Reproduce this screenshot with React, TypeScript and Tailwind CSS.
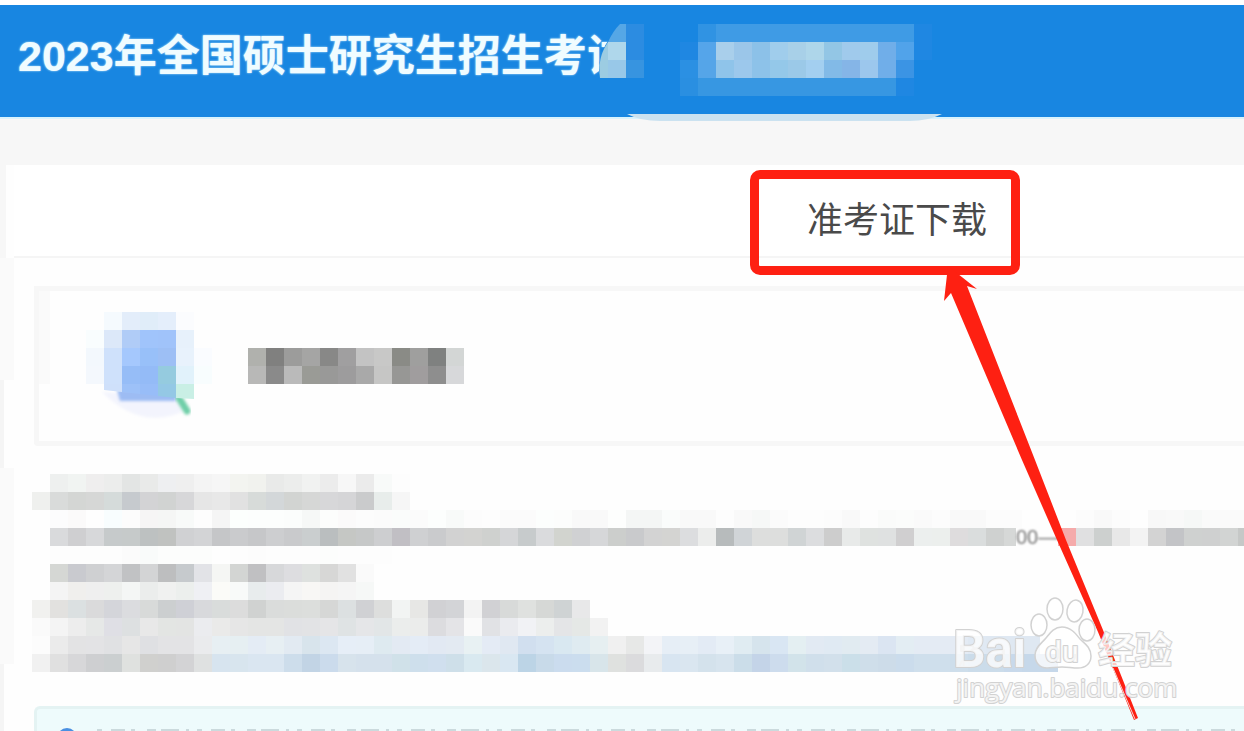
import React from 'react'

// every row is a list of cell colours, '-' is an empty cell
const NAME_ROWS = [
    'b0b1ad 80807f 9c9c9b a5a5a4 888887 a09fa0 c3c3c3 c8c8c7 8a8b86 9f9f9e 7f8180 d3d6d5',
    'b8b8b7 8a8a8a bababa 9a9b96 999998 9d9c9d a9a9a9 c6c6c5 979795 a09d9e 8e8e8e d7d8da',
]

const ROW_A = [
    '- eef0ef f1f4f2 efeeee ecedec e3e5e4 e9eae9 eeeff1 efefef f4f4f4 f6f6f6 f3f4f0 f1f2ee e9eae9 ecedec f1f2f1 ececec f7f7f7 ebebeb f8faf9 fdfdfd',
    'eff0ee d9dbda d4d6d4 d6d7d6 d5dbda c6cace d3d3d5 d1d3d2 d7d7d9 e6e6e6 e8e8e8 e1e1e1 d7dbd9 d3d7d9 d2d4d2 d6d7d6 d7d7d9 d5d5d7 cacbcc e8edeb f6f6f6',
    '- fcfcfd fbfafa fefefe f8fdfe fcfcfc f6f5f5 f5f6f5 f8faf9 fdfdfd f5f5f5 fcfffd fcfefd fcfefd fbfdfc f6f8f7 fcfdfc fbfafa fcfcfc fbfbfb fafcfb fbfbfb fcfefd f8faf9 fcfcfc fdfdfd fbfbfb fbfbfb fcfefd fcfdfc f9f9f9 f9f9f9 fdfefd f4f6f5 f4f6f5 fafcfb f9f9f9 f9f9f9 fdfdfd f9f9f9 f6f8f7 fbfbfb fdfdfd fdfdfd fcfcfc f9f9f9 fdfdfd fafbfa fbfcfb fafafa fcfcfc f9f9f9 f9f9f9 fcfcfc fcfcfc - - - fcfcfc f9f9f9 fcfcfc fefefe f8f8f8 f9f9f9 f6f8f7 fafafa fafafa fafafa',
]

const LINE_START =
    '- d9dadc cfcfd1 d7d8da c6cacb c6caca bdc1c1 c0c2c0 d0d1d3 d3d4d6 c5c6c8 cacbcd c6c7c9 cdced0 c9cacc cacecf babebf c5c7c4 c6c8c8 cdced0 c1bfc4 cfd0d2 cacbcd d2d2d2 d3d3d1 cfd1cf d5d6d8 c7cbcc dadbdd d2d4cf d0d1d3 d6d7d9 cccecc c9cacc d3d3d3 d4d4d2 dcdddf ecedec b7bbbc d0d4d7 dddedd dddedd d0d4d5 dcdddf cdcdcd e8eae9 dfe2e0 dfe1e1 d0cfd0 ecefee ecefed dedcdd dadddd cfd1d0'
const LINE_END = 'f5abab e0e0e1 cdd0cf e8e8e8 f3f3f3 d3d3d3 c3c4c7 cfd1d0 cfd0d0 d2d4d3 c6c8c7'

const ROW_B = [
    '- fdfdfd fdfdfd fdfdfd fdfdfd fbfbfb f9fbfa fcfdfc fcfdfc fcfdfc fefefe fdfdfd fcfcfc fdfdfd fdfdfd fdfdfd fcfdfc fdfdfd fdfdfd fdfdfd',
    '- d5d7d4 c9cacf cfd0d2 d4d5d7 c1c2c4 d3d4d5 bdbebf c6cacd e2e3e7 f5f6f4 d3d5d3 c0c0c2 d7d8da dddde0 dee1df d7d7d6 e1e1e1 fafafa',
    '- f4f4f4 f0efed efefef eef0ee f4f6f5 ebedec f0f1f0 ecefed eff0f4 fbfbf8 f8faf9 e8eced ebecf0 f5f5f5 f8f7f5 f5f4f3 f5f5f5 f6f8f7',
    'f1f1ef e2e1df dbe0e1 dadadb d4d5da dbdcdf d8dad9 cccfd0 cfd0d6 d8d9dc d9dcdb dcdcdc d0d2d1 dadcdb dbdddb dcdedc d6d7d6 dce0e1 d0d1d4 dddedd f2f4f3 e7e7e5 d1d1d4 d3d4d7 f3f3f3 d1d1d4 d8dad9 dfe1df d6d8d6 cfd3d4 e8e8e9',
    'fafafa f4f4f4 ededed e6e8e7 dfdfe5 dde0e1 e8e8e8 e3e5e3 e3e4e3 ebecef eaeae9 e6e6e6 e4e5e4 e4e5e4 e1e2e5 e2e3e5 e5e5e7 dfe3e4 e5e6e8 e2e6e7 ebedec ebeceb dcdcdf e4e4e7 fafafa e1e2e5 eaebef f1f2f5 eceeed e4e5e7 e5e8e6 f2f2f2',
    'fcfcfc ebebeb e3e3e4 e3e3e5 e0e1e3 e6e6e6 dfe0e3 e3e3e5 e3e3e5 eaebed e7eff3 e6eff2 e4ecf5 e7eff3 e2eaf2 d8e4ec dce7f2 e6eef7 e6eef6 deeaf0 e3eaf3 e4ecf6 e2e9f3 e3eaf2 e8f1f3 e4ebf5 e0e8f2 d1dfef d5e3f1 d9e8f1 dfebf1 e6eff1 f0f0f0 e7e8e7 f3f4f7 e6eef6 e7eff6 e3ebf5 e8f0f7 e0ecf2 d6e4ed d9e6f3 e4eff2 e2eaf3 e0eaf3 e1ebf1 e4ebf3 dbe5f2 e3edf3 e4ebf4 e4ebf4 e4ebf4 e0e9f3 dfe8f2 dfe8f2 dfe8f2',
    'f1f1f1 e0e0e0 d7d7d9 cecfd1 cbcfd0 dfe1df d0d0ce cfcfcf d3d3d5 dfe1e1 d7e4ef d8e5ee dae6f1 dae6f1 cdddeb c2d4e5 cbdbec d7e3ec d5e1ec d5e1ec d0e1e9 cedfec d0dfee cedfe9 d9e9f0 dbe6ec d9e7f2 bcd4e6 c8dae9 cbdcee cbddee d8e5ea dfe1df dbdbdd e8ebed d8e5f1 dae6f0 d4e2ec d7e4ee cbdde9 c4d4e8 cddced d2e3ea d0dfeb d2e0eb cbdfe9 cfdeea cddce9 cbdcec cfdfec cfdfec cedeeb cbdcea cbdcea c8d9eb c6d8ea c6d8ea',
]

const HEADER_ROWS = [
    '- 3093e3 3f9be5 3f9be5 3f9be5 3f9be5 3f9be5 3f9be5 3f9be5 3f9be5 3f9be5 3f9be5 3f9be5 1f87e2',
    '1f87e2 55a5ea a9cfeb 9bc6e9 8cc1e8 a0cdec a8d0e8 aed6ea 93c6e5 a0caec 9fccec 70aee9 51a3ea 1f87e2',
    '2b90e3 55a5e8 8fc4ea 9cc8ec 8dc2e9 94c8e9 9bc9e8 a3cff0 82bae7 85b5e7 9cc7ed 70aee9 3b94e4',
    '2a8fe1 3797e2 3797e2 3797e2 3797e2 3797e2 3797e2 3797e2 3797e2 3797e2 3797e2 3797e2 1f87e2',
]

const ICON_ROWS = [
    '- f5fafe e3edfa e0edf9 e4eefb fbfcfe -',
    'f9fdfe dce8f9 b0ccf7 a0c4fb a0c3fa e7f1fb -',
    'f3f8fd cfe1fb a5c8fd 98c0f9 9dbff5 e8f2fc fafcff',
    'f4f8fd cfe1fb 96bdf7 94bbf7 95cbdf e1f2fb f8fdfe',
    '- cfe0fa 9dc1f8 98bdf8 94c8e5 c9efe5 -',
]

function Cells({ row }: { row: string }) {
    return (
        <>
            {row.split(' ').map((c, i) => (
                <span
                    key={i}
                    className="block size-[18px] shrink-0"
                    style={{ backgroundColor: c === '-' ? 'transparent' : '#' + c }}
                />
            ))}
        </>
    )
}

function Mosaic({ rows }: { rows: string[] }) {
    return (
        <div aria-hidden="true">
            {rows.map((row, i) => (
                <div key={i} className="flex">
                    <Cells row={row} />
                </div>
            ))}
        </div>
    )
}

function Header() {
    return (
        <header className="relative h-[114px] shrink-0 border-b-2 border-[#d9f3fd] bg-[#1886e1] pl-[18px]">
            <h1 className="pt-[21px] text-[43px] leading-[60px] font-bold whitespace-nowrap text-[#f0fcff] text-shadow-[0_0_2px_#d8f4ff]">
                2023年全国硕士研究生招生考试
            </h1>
            <svg className="absolute top-0 left-[590px]" width="360" height="118" viewBox="590 5 360 118" aria-hidden="true">
                <path d="M624 24Q600 42 599 70V78H604V96H660V24Z" fill="#1886e1" />
                <path d="M620 24H626V42H608Q613 31 620 24Z" fill="#55a7e6" />
                <path d="M608 42V78H600Q597 58 608 42Z" fill="#9ccce2" />
                <path d="M608 42H626V60H608Z" fill="#afd7eb" />
                <path d="M608 60H626V78H608Z" fill="#98c8e8" />
                <path d="M626 24H644V60H626Z" fill="#2c8ce1" />
                <path d="M626 60H644V78H626Z" fill="#3794e0" />
                <path d="M627 114H942Q928 121 910 121H660Q640 121 627 114Z" fill="#cbe2f0" />
            </svg>
            <div className="absolute top-[19px] left-[680px]">
                <Mosaic rows={HEADER_ROWS} />
            </div>
        </header>
    )
}

function Gutter() {
    return (
        <div className="flex w-[14px] shrink-0 flex-col">
            <div className="h-[93px] w-1.5 bg-[#f7f7f7]"></div>
            <div className="h-[122px] bg-[#fafafa]"></div>
            <div className="h-[88px] w-1 bg-[#f5f5f5]"></div>
            <div className="h-[196px] bg-[#fafafa]"></div>
            <div className="w-1 flex-1 bg-[#f5f5f5]"></div>
        </div>
    )
}

function Tabs() {
    return (
        <nav className="flex h-[93px] border-b-2 border-[#f5f5f5] bg-white">
            <div className="w-[736px] shrink-0"></div>
            <div className="relative z-10 mt-[5px] h-[105px] shrink-0">
                <button className="h-[105px] w-[270px] rounded-[10px] border-[9px] border-[#fe2012] pb-1 pl-6 text-center text-4xl text-[#4a4a4a]">
                    准考证下载
                </button>
                <svg className="absolute top-[94px] left-[190px]" width="204" height="460" viewBox="940 264 204 460" aria-hidden="true">
                    <path d="M948 266L977 289L967 286L1035 460L1066 540L1103 630L1138 718L1134 720L1098 632L1057 540L1022 460L951 293L944 301Z" fill="#fe2012" />
                    <path d="M1113 668L1135 719" stroke="#f3d5d3" strokeWidth="1" fill="none" />
                </svg>
            </div>
        </nav>
    )
}

function Profile() {
    return (
        <div className="mt-7 ml-5 flex h-40 rounded-bl border-5 border-r-0 border-[#f7f7f7]">
            <div className="h-[93px] w-[11px] bg-[#fafafa]"></div>
            <div className="mt-[21px] ml-9 w-[126px]">
                <svg width="126" height="112" viewBox="86 312 126 112" aria-hidden="true">
                    <defs>
                        <filter id="soft" x="-50%" y="-50%" width="200%" height="200%">
                            <feGaussianBlur stdDeviation="1.5" />
                        </filter>
                        <clipPath id="above">
                            <path d="M86 312H212V400L176 398L104 390L86 388Z" />
                        </clipPath>
                    </defs>
                    <path d="M102 392Q140 430 182 412L180 396Z" fill="#f3f4fd" filter="url(#soft)" />
                    <path d="M117 390H176V401H120Z" fill="#9dbcf3" filter="url(#soft)" />
                    <path d="M179 398L187 411" stroke="#6fcfa8" strokeWidth="7" strokeLinecap="round" filter="url(#soft)" />
                    <g clipPath="url(#above)">
                        {ICON_ROWS.map((row, y) =>
                            row.split(' ').map((c, x) =>
                                c === '-' ? null : (
                                    <rect key={x + '-' + y} x={86 + x * 18} y={312 + y * 18} width="18" height="18" fill={'#' + c} shapeRendering="crispEdges" />
                                )
                            )
                        )}
                    </g>
                </svg>
            </div>
            <div className="mt-[57px] ml-9">
                <Mosaic rows={NAME_ROWS} />
            </div>
        </div>
    )
}

function Details() {
    return (
        <div className="mt-7 ml-[18px] overflow-hidden">
            <Mosaic rows={ROW_A} />
            <div className="flex h-[18px]">
                <Cells row={LINE_START} />
                <div className="w-[54px] shrink-0 border-l-[12px] border-[#d6d8d7]">
                    <span className="block text-xl leading-[18px] whitespace-nowrap text-[#777] blur-[1px]">00—</span>
                </div>
                <Cells row={LINE_END} />
            </div>
            <Mosaic rows={ROW_B} />
        </div>
    )
}

function Notice() {
    return (
        <div className="mt-[34px] ml-5 flex-1 overflow-hidden rounded-tl-md border-t-3 border-l-3 border-[#e4f3f3] bg-[#eefbfc]">
            <svg className="mt-[17px] ml-4 block" width="1200" height="8" viewBox="0 0 1200 8" aria-hidden="true">
                <circle cx="14" cy="12" r="10" fill="#4a90e2" />
                <path d="M44 4H1200" stroke="#cbdadd" strokeWidth="2" strokeDasharray="5 9 14 6 4 12 9 5 18 7 3 8" />
            </svg>
        </div>
    )
}

function Watermark() {
    return (
        <svg
            className="absolute right-[64px] bottom-[23px] z-20"
            width="232"
            height="114"
            viewBox="948 594 232 114"
            fill="#ffffff"
            fillOpacity="0.75"
            stroke="#d2d2d2"
            strokeWidth="2"
            strokeLinejoin="round"
            role="img"
            aria-label="Baidu 经验"
        >
            <ellipse cx="1039" cy="625" rx="8" ry="11" strokeWidth="1.5" />
            <ellipse cx="1055" cy="609" rx="8" ry="11" strokeWidth="1.5" />
            <ellipse cx="1075" cy="611" rx="8" ry="11" strokeWidth="1.5" transform="rotate(10 1075 611)" />
            <ellipse cx="1087" cy="630" rx="8" ry="11" strokeWidth="1.5" />
            <path
                d="M1062 627C1071 627 1076 634 1080 639C1084 643 1091 647 1091 656C1091 664 1085 668 1078 668C1072 668 1068 667 1062 667C1056 667 1052 668 1047 668C1040 668 1035 663 1035 655C1035 647 1042 643 1046 638C1050 633 1054 627 1062 627Z"
                strokeWidth="1.5"
            />
            <text x="953" y="667" fontSize="51" fontWeight="700" paintOrder="stroke" className="font-['Roboto',sans-serif]">Bai</text>
            <text x="1045" y="662" fontSize="30" fontWeight="500" paintOrder="stroke" className="font-['Roboto',sans-serif]">du</text>
            <text x="1098" y="664" fontSize="37" fontWeight="700" paintOrder="stroke" className="font-['Noto_Sans_CJK_SC',sans-serif]">经验</text>
            <text x="956" y="697" fontSize="26" paintOrder="stroke" className="font-['Open_Sans',sans-serif]">jingyan.baidu.com</text>
        </svg>
    )
}

export default function App() {
    return (
        <div className="relative flex h-screen flex-col overflow-hidden bg-[#f7f7f7] font-['Liberation_Sans','Noto_Sans_CJK_SC',sans-serif]">
            <div className="h-[5px] shrink-0 bg-white"></div>
            <Header />
            <main className="mt-[46px] flex flex-1 bg-[#fefefe]">
                <Gutter />
                <section className="flex min-w-0 flex-1 flex-col">
                    <Tabs />
                    <Profile />
                    <Details />
                    <Notice />
                </section>
            </main>
            <Watermark />
        </div>
    )
}
